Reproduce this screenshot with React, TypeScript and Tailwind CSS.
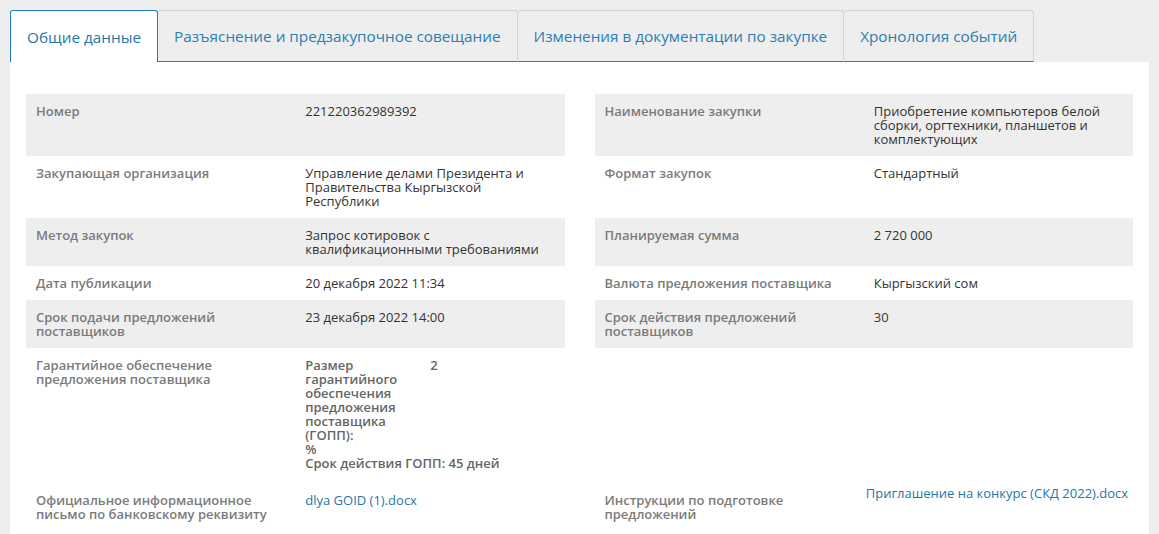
import React from 'react';

type Row = {
  label: string;
  value: React.ReactNode;
};

const tabs = [
  'Общие данные',
  'Разъяснение и предзакупочное совещание',
  'Изменения в документации по закупке',
  'Хронология событий',
];

function Guarantee() {
  return (
    <div className="font-semibold text-[#666]">
      <div className="flex">
        <div className="w-[125px]">Размер гарантийного обеспечения предложения поставщика (ГОПП):</div>
        <div>2</div>
      </div>
      <div>%</div>
      <div>Срок действия ГОПП: 45 дней</div>
    </div>
  );
}

const rows: [Row, Row | null][] = [
  [
    { label: 'Номер', value: '221220362989392' },
    { label: 'Наименование закупки', value: 'Приобретение компьютеров белой сборки, оргтехники, планшетов и комплектующих' },
  ],
  [
    { label: 'Закупающая организация', value: 'Управление делами Президента и Правительства Кыргызской Республики' },
    { label: 'Формат закупок', value: 'Стандартный' },
  ],
  [
    { label: 'Метод закупок', value: 'Запрос котировок с квалификационными требованиями' },
    { label: 'Планируемая сумма', value: '2 720 000' },
  ],
  [
    { label: 'Дата публикации', value: '20 декабря 2022 11:34' },
    { label: 'Валюта предложения поставщика', value: 'Кыргызский сом' },
  ],
  [
    { label: 'Срок подачи предложений поставщиков', value: '23 декабря 2022 14:00' },
    { label: 'Срок действия предложений поставщиков', value: '30' },
  ],
  [{ label: 'Гарантийное обеспечение предложения поставщика', value: <Guarantee /> }, null],
];

function Cell({ row, shaded, last }: { row: Row | null; shaded: boolean; last: boolean }) {
  return (
    <div className={`flex pt-[10px] ${last ? 'pb-[13px]' : 'pb-[10px]'} ${shaded ? 'bg-[#eeeeee]' : ''}`}>
      {row && (
        <>
          <div className="w-1/2 shrink-0 px-[10px] font-semibold text-[#7b7b7b]">{row.label}</div>
          <div className="w-1/2 px-[10px] text-[#333]">{row.value}</div>
        </>
      )}
    </div>
  );
}

export default function App() {
  return (
    <div
      className="min-h-screen bg-[#eeeeee] p-[10px] text-[13px] leading-[14px]"
      style={{ fontFamily: '"Open Sans", "Noto Sans", sans-serif' }}
    >
      <div className="flex">
        {tabs.map((tab, i) =>
          i === 0 ? (
            <div
              key={tab}
              className="flex h-[52px] items-center rounded-t-[3px] border border-b-0 border-[#1a80b6] bg-white px-4 text-[15.3px] text-[#1f76a8]"
            >
              {tab}
            </div>
          ) : (
            <div
              key={tab}
              className="flex h-[52px] items-center rounded-t-[3px] border border-l-0 border-[#d4d4d4] border-b-[#1a80b6] bg-[#eeeeee] px-4 text-[15.3px] text-[#2a80b0]"
            >
              {tab}
            </div>
          )
        )}
      </div>
      <div className="bg-white px-4 pt-8 pb-4">
        <div className="grid grid-cols-2 gap-x-[30px]">
          {rows.map(([left, right], i) => (
            <React.Fragment key={i}>
              <Cell row={left} shaded={i % 2 === 0} last={i === rows.length - 1} />
              <Cell row={right} shaded={i % 2 === 0} last={i === rows.length - 1} />
            </React.Fragment>
          ))}
          <div className="flex py-[10px]">
            <div className="w-1/2 shrink-0 px-[10px] font-semibold text-[#7b7b7b]">
              Официальное информационное письмо по банковскому реквизиту
            </div>
            <div className="w-1/2 px-[10px]">
              <a className="text-[#1f76a8]">dlya GOID (1).docx</a>
            </div>
          </div>
          <div className="flex py-[10px]">
            <div className="w-1/2 shrink-0 px-[10px] font-semibold text-[#7b7b7b]">
              Инструкции по подготовке предложений
            </div>
            <div className="-mt-[7px] w-1/2 whitespace-nowrap pl-[2px]">
              <a className="text-[#1f76a8]">Приглашение на конкурс (СКД 2022).docx</a>
            </div>
          </div>
        </div>
      </div>
    </div>
  );
}
